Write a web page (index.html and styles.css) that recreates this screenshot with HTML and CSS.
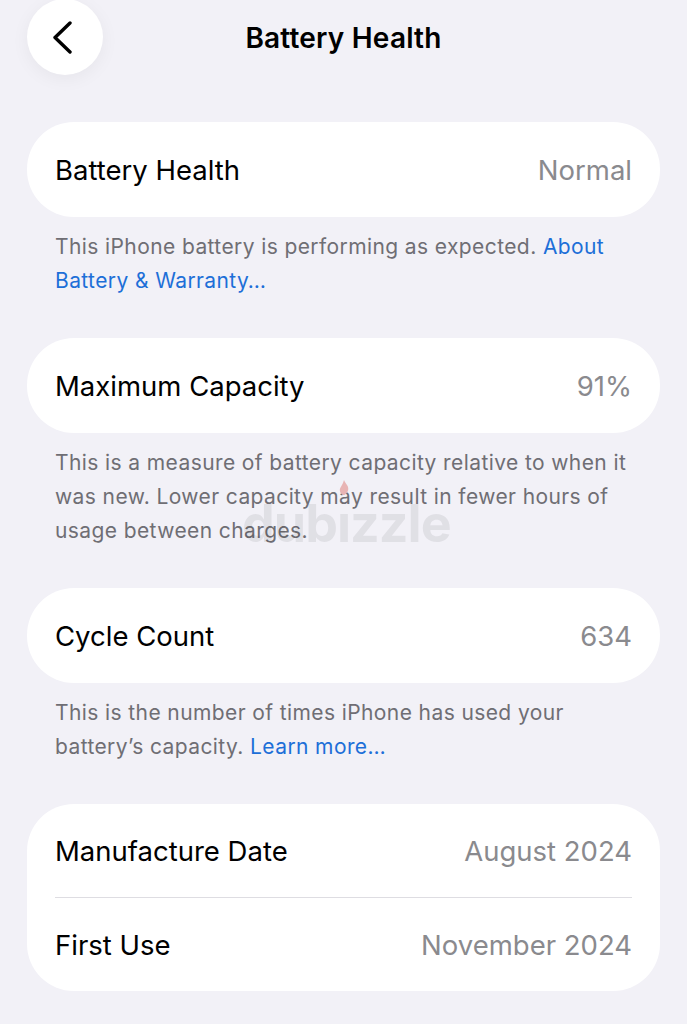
FILE: index.html
```html
<!DOCTYPE html>
<html lang="en">

<head>
  <meta charset="UTF-8" />
  <title>Battery Health</title>
  <link rel="stylesheet" href="styles.css">
</head>

<body>

  <div class="stranka">
    <div class="hlavicka">
      <button class="spat" aria-label="Back">
        <svg width="24" height="34" viewBox="0 0 24 34">
          <path d="M19 3 L4 17.5 L19 32" fill="none" stroke="#000" stroke-width="3.4" stroke-linecap="round" stroke-linejoin="round" />
        </svg>
      </button>
      <h1 class="nadpis">Battery Health</h1>
      <span></span>
    </div>

    <div class="karta">
      <div class="riadok">
        <span class="nazov">Battery Health</span>
        <span class="hodnota">Normal</span>
      </div>
    </div>
    <p class="popis">This iPhone battery is performing as expected. <a href="#">About Battery &amp; Warranty…</a></p>

    <div class="karta">
      <div class="riadok">
        <span class="nazov">Maximum Capacity</span>
        <span class="hodnota">91%</span>
      </div>
    </div>
    <p class="popis">This is a measure of battery capacity relative to when it was new. Lower capacity may result in fewer hours of usage between charges.</p>

    <div class="karta">
      <div class="riadok">
        <span class="nazov">Cycle Count</span>
        <span class="hodnota">634</span>
      </div>
    </div>
    <p class="popis">This is the number of times iPhone has used your battery’s capacity. <a href="#">Learn more…</a></p>

    <div class="karta">
      <div class="riadok riadok-nizsi">
        <span class="nazov">Manufacture Date</span>
        <span class="hodnota">August 2024</span>
      </div>
      <div class="ciara"></div>
      <div class="riadok riadok-nizsi">
        <span class="nazov">First Use</span>
        <span class="hodnota">November 2024</span>
      </div>
    </div>
  </div>

  <!-- vodoznak -->
  <div class="vodoznak">
    <span>dub</span><span class="vodoznak-i">ı<svg class="plamen" width="10" height="15" viewBox="0 0 12 18"><path d="M6 0 C8 5 12 7 11 12 C10 16 7 18 6 18 C4 18 1 16 1 12 C1 9 4 7 6 0 Z" fill="#e8b4b4" /></svg></span><span>zzle</span>
  </div>

</body>

</html>
```

FILE: styles.css
```css
body {
  font-family: Inter, "Noto Sans", sans-serif;
  background-color: #f2f1f7;
  margin: 0;
  padding: 0;
}

.stranka {
  padding: 0 27px;
}

.hlavicka {
  display: grid;
  grid-template-columns: 76px 1fr 76px;
  align-items: center;
  height: 75px;
  margin-bottom: 47px;
}

.spat {
  width: 76px;
  height: 76px;
  margin-top: -1px;
  border: none;
  border-radius: 50%;
  background: #fff;
  box-shadow: 0 4px 18px rgba(0, 0, 0, 0.05);
  display: flex;
  align-items: center;
  justify-content: center;
  padding: 0 4px 0 0;
}

.nadpis {
  margin: 0;
  text-align: center;
  font-size: 28px;
  font-weight: 600;
  letter-spacing: 0.2px;
  color: #000;
}

.karta {
  background: #fff;
  border-radius: 47px;
}

.riadok {
  height: 95px;
  padding: 0 28px;
  display: flex;
  align-items: center;
  justify-content: space-between;
  font-size: 27.5px;
}

.riadok-nizsi {
  height: 93px;
}

.nazov {
  color: #000;
}

.hodnota {
  color: #8a8a8e;
}

.ciara {
  height: 1px;
  margin: 0 28px;
  background: #dedde2;
}

.popis {
  margin: 13px 0 40px;
  padding: 0 28px;
  font-size: 21px;
  letter-spacing: 0.4px;
  line-height: 34px;
  color: #6f6e74;
}

.popis a {
  color: #1d6fd8;
  text-decoration: none;
}

.vodoznak {
  position: absolute;
  left: 242px;
  top: 492px;
  font-size: 52px;
  font-weight: 700;
  letter-spacing: -1px;
  color: rgba(0, 0, 0, 0.07);
  pointer-events: none;
}

.vodoznak-i {
  position: relative;
}

.plamen {
  position: absolute;
  left: 2px;
  top: -12px;
}
```
